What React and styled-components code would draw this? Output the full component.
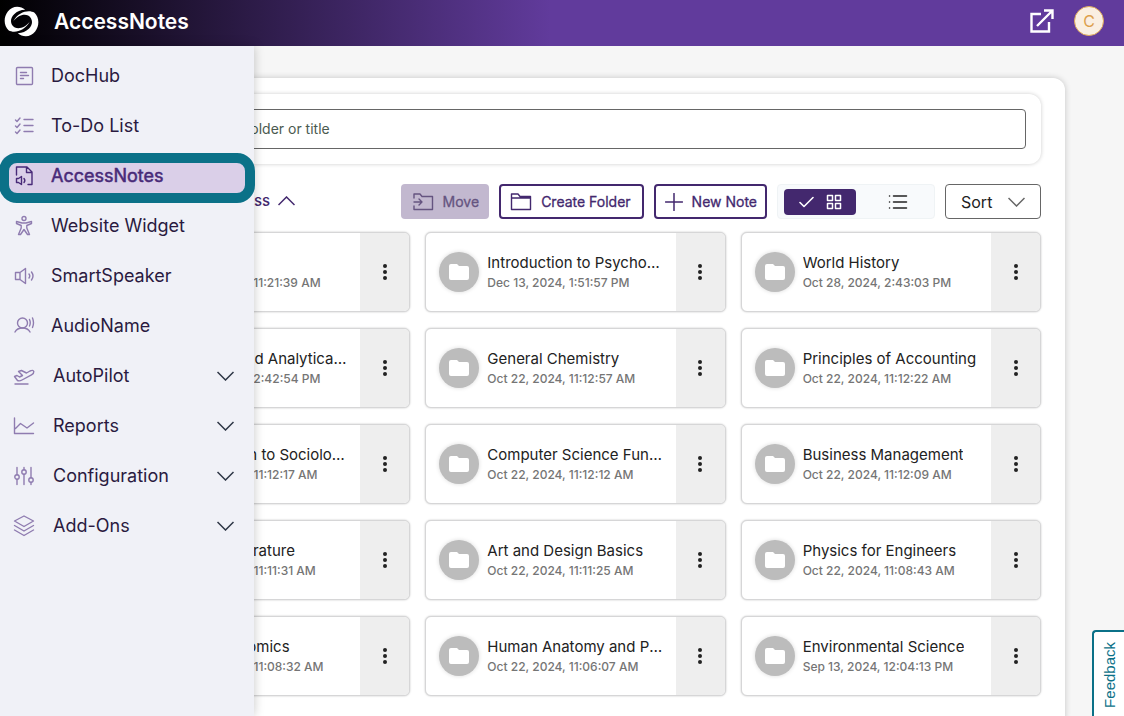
import React from "react";
import styled, { createGlobalStyle, css } from "styled-components";

const Global = createGlobalStyle`
  *, *::before, *::after { box-sizing: border-box; }
  html, body { margin: 0; height: 100%; }
  body { font-family: Inter, "Open Sans", sans-serif; color: #222; background: #f6f6f6; }
  button, input { font: inherit; color: inherit; margin: 0; }
  button { cursor: pointer; }
  svg { display: block; flex: none; }
`;

const Shell = styled.div`
  height: 100vh;
  display: flex;
  flex-direction: column;
  overflow: hidden;
  position: relative;
`;

const Header = styled.header`
  flex: none;
  height: 46px;
  display: flex;
  align-items: center;
  padding: 0 20px 4px 4px;
  color: #fff;
  background: linear-gradient(90deg, #000 0%, #613b9c 49%);
`;

const Brand = styled.h1`
  margin: 0 auto 0 15px;
  padding-top: 2px;
  font-size: 21px;
  line-height: 28px;
  font-weight: 600;
`;

const IconLink = styled.a`
  color: #fff;
  margin-right: 20px;
`;

const Avatar = styled.button`
  width: 30px;
  height: 30px;
  padding: 0;
  border-radius: 50%;
  border: 1px solid #dda858;
  background: #faefe2;
  color: #dda04c;
  font-size: 16px;
  line-height: 28px;
`;

const Body = styled.div`
  flex: 1;
  min-height: 0;
  position: relative;
  display: flex;
`;

const Sidebar = styled.nav`
  position: absolute;
  z-index: 2;
  top: 0;
  bottom: 0;
  left: 0;
  width: 254px;
  padding-top: 5px;
  background: #f0f1f7;
  box-shadow: 0 0 10px rgba(0, 0, 0, 0.22);
`;

const NavList = styled.ul`
  list-style: none;
  margin: 0;
  padding: 0;
`;

const NavItem = styled.li`
  position: relative;
  height: 50px;
  padding: 5px 8px 5px 2px;
`;

const navStyle = css`
  width: 100%;
  height: 40px;
  display: flex;
  align-items: center;
  padding: 0 12px 0 11px;
  border: 0;
  border-radius: 6px;
  background: transparent;
  color: #2a1a40;
  font-size: 18px;
  line-height: 24px;
  text-align: left;
  text-decoration: none;
`;

const NavLink = styled.a`
  ${navStyle}
  gap: 16px;
  ${(p) => p.$active && css`
    background: #dacfe8;
    color: #482a78;
    -webkit-text-stroke: 0.5px #482a78;
  `}
`;

const NavButton = styled.button`
  ${navStyle}
  gap: 18px;
`;

const NavText = styled.span`
  flex: 1;
`;

const NavIcon = styled.span`
  color: ${(p) => (p.$active ? "#482a78" : "#8f7cb0")};
`;

const FocusRing = styled.span`
  position: absolute;
  inset: 2px -1px -2px -1px;
  border: 10px solid #0b7188;
  border-radius: 18px;
  pointer-events: none;
`;

const Main = styled.main`
  flex: 1;
  min-width: 0;
  padding: 32px 59px 0 86px;
  overflow-y: auto;
  scrollbar-width: none;
`;

const Panel = styled.section`
  min-height: 100%;
  padding: 16px 24px 32px;
  background: #fff;
  border-radius: 12px;
  box-shadow: 0 0 6px rgba(0, 0, 0, 0.2);
`;

const SearchCard = styled.form`
  padding: 15px;
  background: #fff;
  border-radius: 12px;
  box-shadow: 0 0 4px rgba(0, 0, 0, 0.2);
`;

const SearchInput = styled.input`
  display: block;
  width: 100%;
  height: 40px;
  padding: 0 12px 2px 49px;
  border: 1px solid #666;
  border-radius: 4px;
  background: #fff;
  font-size: 14px;
  &::placeholder { color: #4b5a50; opacity: 1; }
`;

const Toolbar = styled.div`
  display: flex;
  align-items: center;
  gap: 10px;
  padding: 20px 0 13px;
`;

const Crumb = styled.button`
  display: flex;
  align-items: center;
  gap: 8px;
  margin: 0 auto 0 62px;
  padding: 0 0 2px;
  border: 0;
  background: none;
  color: #43286e;
  font-size: 15px;
  line-height: 20px;
  font-weight: 500;
`;

const ToolButton = styled.button`
  height: 35px;
  display: flex;
  align-items: center;
  gap: 9px;
  padding: 0 ${(p) => p.$pad || 10}px 0 9px;
  border: 2px solid #43286e;
  border-radius: 4px;
  background: #fff;
  color: #43286e;
  font-size: 14px;
  line-height: 20px;
  -webkit-text-stroke: 0.3px currentColor;
  white-space: nowrap;
  &:disabled {
    border: 0;
    padding-left: 11px;
    background: #c2b8cf;
    color: #655480;
    cursor: default;
  }
`;

const ViewToggle = styled.div`
  height: 35px;
  width: 158px;
  padding: 4px 0 3px 6px;
  display: flex;
  gap: 6px;
  border: 1px solid #eff3f5;
  border-radius: 4px;
  background: #f8fafc;
`;

const ViewButton = styled.button`
  flex: 1;
  display: flex;
  align-items: center;
  justify-content: center;
  gap: 12px;
  padding: 0;
  border: 0;
  border-radius: 4px;
  background: ${(p) => (p.$on ? "#43286e" : "transparent")};
  color: ${(p) => (p.$on ? "#fff" : "#222")};
`;

const SortButton = styled.button`
  height: 35px;
  width: 96px;
  display: flex;
  align-items: center;
  justify-content: space-between;
  padding: 0 15px;
  border: 1px solid #666;
  border-radius: 4px;
  background: #fff;
  font-size: 16px;
  line-height: 20px;
`;

const Grid = styled.ul`
  list-style: none;
  margin: 0;
  padding: 0;
  display: grid;
  grid-template-columns: repeat(3, minmax(0, 1fr));
  gap: 16px 15px;
`;

const Card = styled.li`
  height: 80px;
  display: flex;
  border: 1px solid #d6d6d7;
  border-radius: 6px;
  background: #fff;
  box-shadow: 0 0 2px rgba(0, 0, 0, 0.25);
  overflow: hidden;
`;

const CardLink = styled.a`
  flex: 1;
  min-width: 0;
  display: flex;
  align-items: center;
  gap: 8px;
  padding: 0 13px;
  color: inherit;
  text-decoration: none;
`;

const FolderBadge = styled.span`
  flex: none;
  width: 40px;
  height: 40px;
  display: grid;
  place-items: center;
  border-radius: 50%;
  background: #bcbcbc;
  color: #fff;
  box-shadow: 0 0 4px rgba(0, 0, 0, 0.15);
`;

const CardText = styled.span`
  min-width: 0;
  padding-top: 2px;
  display: flex;
  flex-direction: column;
`;

const CardTitle = styled.span`
  overflow: hidden;
  text-overflow: ellipsis;
  white-space: nowrap;
  font-size: 15px;
  line-height: 20px;
  color: #222;
`;

const CardDate = styled.time`
  font-size: 12px;
  line-height: 20px;
  font-weight: 500;
  color: #757575;
  white-space: nowrap;
`;

const MoreButton = styled.button`
  flex: none;
  width: 49px;
  display: grid;
  place-items: center;
  padding: 0;
  border: 0;
  background: #eee;
  color: #222;
`;

const Feedback = styled.button`
  position: absolute;
  z-index: 3;
  right: 0;
  bottom: 0;
  width: 32px;
  height: 86px;
  padding: 0 0 8px 2px;
  border: 2px solid #0b7188;
  border-width: 2px 0 0 2px;
  border-radius: 4px 0 0 0;
  background: #fff;
  color: #0b7188;
  font-family: "Liberation Sans", Arial, sans-serif;
  font-size: 15px;
  line-height: 20px;
  display: flex;
  align-items: flex-end;
  justify-content: center;
`;

const FeedbackText = styled.span`
  writing-mode: vertical-rl;
  transform: rotate(180deg);
`;

const Line = ({ w = 20, h = 20, box, sw = 1.4, children }) => (
  <svg width={w} height={h} viewBox={box || `0 0 ${w} ${h}`} fill="none" stroke="currentColor" strokeWidth={sw} strokeLinecap="round" strokeLinejoin="round" aria-hidden="true">
    {children}
  </svg>
);

const swirl = "M74 27C60 14 35 14 22 32C8 50 10 75 24 88C40 98 72 92 88 62C76 78 58 86 43 80C28 71 28 52 41 40C50 32 60 27 74 27Z";

const Logo = () => (
  <svg width="35" height="31" viewBox="10.500 15.500 105 93" fill="#fff" aria-hidden="true">
    <path d={swirl} />
    <path d={swirl} transform="rotate(180 63 62)" />
  </svg>
);

const icons = {
  doc: (
    <><rect x="2.500" y="1.500" width="16" height="17" rx="1" /><path d="M6.500 6.500h6M6.500 9.500h8M6.500 12.500h3" /></>
  ),
  todo: <path d="M1.500 4l1.500 1.500 3-3.500M1.500 10l1.500 1.500 3-3.500M1.500 16l1.500 1.500 3-3.500M10 3.500h9M10 9.500h9M10 15.500h9" />,
  notes: (
    <><path d="M2.500 9V1H13L18 6V18.500H14M12.500 1V6.500H18" /><path d="M2.500 12.500H4.500L7.500 10.500V18.500L4.500 16.500H2.500ZM10 12.500q1.700 2 0 4" /></>
  ),
  person: (
    <><circle cx="10" cy="2.500" r="2" /><path d="M2.500 5.500L8 7H12L17.500 5.500V7.500L12.800 9.500V12L15.500 18.500H13.500L10 13.500L6.500 18.500H4.500L7.200 12V9.500L2.500 7.500Z" /></>
  ),
  speaker: <path d="M1.500 6.500H6L11.500 2.500V17.500L6 13.500H1.500ZM6 6.500V13.500M15 8q1.500 2 0 4M17.500 6q3 4 0 8" />,
  audio: <><circle cx="8.500" cy="7" r="5" /><path d="M1 16Q3 12 8.500 12T16 16M15.500 3.500q1.500 3.200 0 6.500M18.500 2q2 4.700 0 9.500" /></>,
  plane: <path d="M1 18H14M3.500 14.500L0.500 10.500L3 9.500L5.500 11L8.500 9.500L4.500 5.500L7.500 4.500L12.500 7L16 5Q19 3.500 19.800 5.500Q20 7.500 17.500 8.800L8 14Q5.500 15.500 3.500 14.500Z" />,
  chart: <path d="M0.500 2V17.500H19.500M1.500 12.500L6.500 7.500L13 12L19.500 7" />,
  sliders: <><circle cx="3" cy="11" r="2.200" /><circle cx="10" cy="6" r="2.200" /><circle cx="17" cy="14" r="2.200" /><path d="M3 1.500V8.800M3 13.200V18.500M10 1.500V3.800M10 8.200V18.500M17 1.500V11.800M17 16.200V18.500" /></>,
  layers: <path d="M10 0L19.500 5L10 10.500L0.500 5ZM0.500 9.500L10 15L19.500 9.500M0.500 14L10 19.500L19.500 14" />,
};

const Chevron = ({ up, w = 17, color }) => (
  <svg width={w} height="10" viewBox="0 0 17 10" fill="none" stroke={color || "currentColor"} strokeWidth="1.500" aria-hidden="true">
    <path d={up ? "M0.500 9L8.500 1L16.500 9" : "M0.500 1L8.500 9L16.500 1"} />
  </svg>
);

const links = [
  ["doc", "DocHub"],
  ["todo", "To-Do List"],
  ["notes", "AccessNotes", true],
  ["person", "Website Widget"],
  ["speaker", "SmartSpeaker"],
  ["audio", "AudioName"],
];
const groups = [
  ["plane", "AutoPilot"],
  ["chart", "Reports"],
  ["sliders", "Configuration"],
  ["layers", "Add-Ons"],
];

const folders = [
  ["Biology", "Dec 16, 2024, 11:21:39 AM"],
  ["Introduction to Psychology", "Dec 13, 2024, 1:51:57 PM"],
  ["World History", "Oct 28, 2024, 2:43:03 PM"],
  ["Calculus and Analytical Geometry", "Oct 28, 2024, 2:42:54 PM"],
  ["General Chemistry", "Oct 22, 2024, 11:12:57 AM"],
  ["Principles of Accounting", "Oct 22, 2024, 11:12:22 AM"],
  ["Introduction to Sociology", "Oct 22, 2024, 11:12:17 AM"],
  ["Computer Science Fundamentals", "Oct 22, 2024, 11:12:12 AM"],
  ["Business Management", "Oct 22, 2024, 11:12:09 AM"],
  ["English Literature", "Oct 22, 2024, 11:11:31 AM"],
  ["Art and Design Basics", "Oct 22, 2024, 11:11:25 AM"],
  ["Physics for Engineers", "Oct 22, 2024, 11:08:43 AM"],
  ["Microeconomics", "Oct 22, 2024, 11:08:32 AM"],
  ["Human Anatomy and Physiology", "Oct 22, 2024, 11:06:07 AM"],
  ["Environmental Science", "Sep 13, 2024, 12:04:13 PM"],
];

export default function App() {
  return (
    <Shell>
      <Global />
      <Header>
        <Logo />
        <Brand>AccessNotes</Brand>
        <IconLink href="#open" aria-label="Open in new window">
          <svg width="24" height="24" viewBox="0 0 24 24" fill="none" stroke="currentColor" strokeWidth="2.400" aria-hidden="true">
            <path d="M11 5H1.500V22.500H19V13M14 1.500H22.500V10M22 2L7 17" />
          </svg>
        </IconLink>
        <Avatar>C</Avatar>
      </Header>
      <Body>
        <Sidebar>
          <NavList>
            {links.map(([icon, label, active]) => (
              <NavItem key={label}>
                <NavLink href="#nav" $active={active}>
                  <NavIcon $active={active}><Line w={22} h={22} box="-1 -1 22 22">{icons[icon]}</Line></NavIcon>
                  <NavText>{label}</NavText>
                </NavLink>
                {active && <FocusRing />}
              </NavItem>
            ))}
            {groups.map(([icon, label]) => (
              <NavItem key={label}>
                <NavButton>
                  <NavIcon><Line w={22} h={22} box="-1 -1 22 22">{icons[icon]}</Line></NavIcon>
                  <NavText>{label}</NavText>
                  <Chevron color="#2c3545" />
                </NavButton>
              </NavItem>
            ))}
          </NavList>
        </Sidebar>
        <Main>
          <Panel>
            <SearchCard>
              <SearchInput aria-label="Search" placeholder="Search by folder or title" />
            </SearchCard>
            <Toolbar>
              <Crumb>Quick Access <Chevron up /></Crumb>
              <ToolButton disabled>
                <Line w={22} h={20} sw={1.4}><path d="M2 6V2H8L10 4.500H20.500V17.500H2V14M2 10H10M7 7L10 10L7 13" /></Line>
                Move
              </ToolButton>
              <ToolButton $pad={11}>
                <Line w={22} h={20} sw={1.4}><path d="M1.500 17.500V2H8L10 4.500H20.500V17.500ZM1.500 6H20" /></Line>
                Create Folder
              </ToolButton>
              <ToolButton $pad={8}>
                <Line w={18} h={18} sw={1.5}><path d="M9 0.500V17.500M0.500 9H17.500" /></Line>
                New Note
              </ToolButton>
              <ViewToggle>
                <ViewButton $on aria-label="Grid view" aria-pressed="true">
                  <Line w={15} h={12} sw={1.6}><path d="M1 6.500L5 10.500L14 1.500" /></Line>
                  <Line w={16} h={16} sw={1.5}><path d="M1.500 1.500h5v5h-5zM9.500 1.500h5v5h-5zM1.500 9.500h5v5h-5zM9.500 9.500h5v5h-5z" /></Line>
                </ViewButton>
                <ViewButton aria-label="List view" aria-pressed="false">
                  <Line w={20} h={16} sw={1.5}><path d="M5.500 2H18.500M5.500 8H18.500M5.500 14H18.500M1.500 2h.1M1.500 8h.1M1.500 14h.1" /></Line>
                </ViewButton>
              </ViewToggle>
              <SortButton>Sort <Chevron color="#666" /></SortButton>
            </Toolbar>
            <Grid>
              {folders.map(([title, date]) => (
                <Card key={title}>
                  <CardLink href="#folder">
                    <FolderBadge>
                      <svg width="20" height="16" viewBox="0 0 20 16" fill="currentColor" aria-hidden="true">
                        <path d="M2 0H8L10 2H18Q20 2 20 4V14Q20 16 18 16H2Q0 16 0 14V2Q0 0 2 0Z" />
                      </svg>
                    </FolderBadge>
                    <CardText>
                      <CardTitle>{title}</CardTitle>
                      <CardDate>{date}</CardDate>
                    </CardText>
                  </CardLink>
                  <MoreButton aria-label={`More options for ${title}`}>
                    <svg width="4" height="16" viewBox="0 0 4 16" fill="currentColor" aria-hidden="true">
                      <circle cx="2" cy="2" r="2" /><circle cx="2" cy="8" r="2" /><circle cx="2" cy="14" r="2" />
                    </svg>
                  </MoreButton>
                </Card>
              ))}
            </Grid>
          </Panel>
        </Main>
      </Body>
      <Feedback><FeedbackText>Feedback</FeedbackText></Feedback>
    </Shell>
  );
}
